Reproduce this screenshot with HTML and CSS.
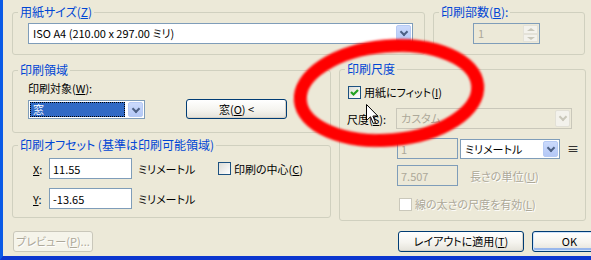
FILE: index.html
```html
<!DOCTYPE html>
<html lang="ja">
<head>
  <meta charset="UTF-8" />
  <title>印刷</title>
  <link rel="stylesheet" href="styles.css">
</head>
<body>

  <div class="window">

    <div class="row-top">
      <fieldset class="group paper">
        <legend>用紙サイズ(<u>Z</u>)</legend>
        <div class="group-body">
          <div class="combo paper-combo">
            <span class="combo-text">ISO A4 (210.00 x 297.00 ミリ)</span>
            <span class="drop"></span>
          </div>
        </div>
      </fieldset>

      <fieldset class="group copies">
        <legend>印刷部数(<u>B</u>):</legend>
        <div class="group-body">
          <div class="spin">
            <span class="spin-text">1</span>
            <span class="spin-btns">
              <span class="spin-btn up"></span>
              <span class="spin-btn down"></span>
            </span>
          </div>
        </div>
      </fieldset>
    </div>

    <div class="row-middle">
      <div class="col-left">
        <fieldset class="group area">
          <legend>印刷領域</legend>
          <div class="group-body">
            <div class="line">印刷対象(<u>W</u>):</div>
            <div class="area-row">
              <div class="combo area-combo">
                <span class="combo-text selected">窓</span>
                <span class="drop"></span>
              </div>
              <button class="btn window-btn">窓(<u>O</u>) &lt;</button>
            </div>
          </div>
        </fieldset>

        <fieldset class="group offset">
          <legend>印刷オフセット (基準は印刷可能領域)</legend>
          <div class="group-body">
            <div class="field-row">
              <span class="axis"><u>X</u>:</span>
              <input class="text-input offset-input" type="text" value="11.55">
              <span class="unit">ミリメートル</span>
              <span class="check"></span>
              <span class="check-label">印刷の中心(<u>C</u>)</span>
            </div>
            <div class="field-row">
              <span class="axis"><u>Y</u>:</span>
              <input class="text-input offset-input" type="text" value="-13.65">
              <span class="unit">ミリメートル</span>
            </div>
          </div>
        </fieldset>
      </div>

      <fieldset class="group scale">
        <legend>印刷尺度</legend>
        <div class="group-body">
          <div class="scale-row">
            <span class="check checked">
              <svg width="11" height="11" viewBox="0 0 11 11"><path d="M2 5 L4.5 7.5 L9 3" fill="none" stroke="#21a121" stroke-width="2.2"/></svg>
            </span>
            <span class="check-label">用紙にフィット(<u>I</u>)</span>
          </div>
          <div class="scale-row gap-10">
            <span class="scale-label">尺度(<u>S</u>):</span>
            <div class="combo disabled scale-combo">
              <span class="combo-text">カスタム</span>
              <span class="drop"></span>
            </div>
          </div>
          <div class="scale-row gap-9 indent">
            <input class="text-input small-input" type="text" value="1" disabled>
            <div class="combo unit-combo">
              <span class="combo-text">ミリメートル</span>
              <span class="drop"></span>
            </div>
            <span class="equals">≡</span>
          </div>
          <div class="scale-row gap-6 indent">
            <input class="text-input small-input" type="text" value="7.507" disabled>
            <span class="muted units-label">長さの単位(<u>U</u>)</span>
          </div>
          <div class="scale-row gap-11 indent-check">
            <span class="check disabled"></span>
            <span class="check-label muted">線の太さの尺度を有効(<u>L</u>)</span>
          </div>
        </div>
      </fieldset>
    </div>

    <div class="row-buttons">
      <button class="btn preview" disabled>プレビュー(<u>P</u>)...</button>
      <button class="btn apply">レイアウトに適用(<u>T</u>)</button>
      <button class="btn ok">OK</button>
    </div>

  </div>

  <svg class="annotation" width="591" height="260" viewBox="0 0 591 260">
    <defs>
      <filter id="soft" x="-10%" y="-10%" width="120%" height="120%">
        <feGaussianBlur stdDeviation="0.9"/>
      </filter>
    </defs>
    <ellipse cx="389" cy="93" rx="89" ry="47" transform="rotate(-5 389 93)"
             fill="none" stroke="#ff0000" stroke-width="13" filter="url(#soft)"/>
  </svg>

  <svg class="cursor" width="14" height="22" viewBox="0 0 14 22">
    <path d="M0.5 0.5 L0.5 16.5 L4.5 12.8 L7.3 19.5 L9.6 18.5 L6.9 12 L11.8 12 Z"
          fill="#fff" stroke="#000" stroke-width="1"/>
  </svg>

</body>
</html>
```

FILE: styles.css
```css
* {
  box-sizing: border-box;
}
html, body {
  margin: 0;
}
body {
  position: relative;
  width: 591px;
  height: 260px;
  overflow: hidden;
  background-color: #ece9d8;
  color: #000;
  font-family: "Noto Sans CJK JP", "Liberation Sans", sans-serif;
  font-size: 11px;
  line-height: 14px;
  font-feature-settings: "palt";
}
u {
  text-underline-offset: 1px;
}
.window {
  width: 620px;
  height: 260px;
  border-left: 3px solid #0a5ae6;
  border-bottom: 4px solid #0b36cf;
  padding: 5px 13px 0 9px;
}

/* group boxes */
.group {
  margin: 0;
  padding: 0;
  border: 1px solid #d0d0bf;
  border-radius: 3px;
  min-width: 0;
}
.group legend {
  margin-left: 5px;
  padding: 0 2px;
  color: #0046d5;
  font-size: 12px;
  line-height: 14px;
}
.row-top {
  display: flex;
  gap: 8px;
}
.paper {
  width: 413px;
}
.paper .group-body {
  padding: 4px 0 10px 15px;
}
.copies {
  width: 152px;
}
.copies .group-body {
  padding: 4px 0 0 39px;
}
.row-middle {
  display: flex;
  align-items: flex-start;
  gap: 8px;
  margin-top: 7px;
}
.col-left {
  display: flex;
  flex-direction: column;
  gap: 5px;
  width: 319px;
  margin-top: 1px;
}
.area .group-body {
  padding: 4px 0 13px 15px;
}
.line {
  line-height: 14px;
}
.area-row {
  display: flex;
  align-items: center;
  margin-top: 4px;
}
.offset .group-body {
  padding: 6px 0 8px 20px;
}
.field-row {
  display: flex;
  align-items: center;
}
.field-row + .field-row {
  margin-top: 9px;
}
.axis {
  width: 16px;
}
.unit {
  width: 80px;
  margin-left: 6px;
}
.scale {
  width: 247px;
}
.scale .group-body {
  padding: 9px 0 9px 8px;
}
.scale-row {
  display: flex;
  align-items: center;
}
.gap-10 { margin-top: 9px; }
.gap-9 { margin-top: 9px; }
.gap-6 { margin-top: 6px; }
.gap-11 { margin-top: 11px; }
.indent {
  padding-left: 49px;
}
.indent-check {
  padding-left: 51px;
}
.scale-label {
  width: 49px;
  margin-left: -1px;
  padding-right: 1px;
}
.equals {
  margin-left: 7px;
  font-size: 12px;
}
.units-label {
  margin-left: 12px;
}
.muted {
  color: #aca899;
  text-shadow: 1px 1px 0 #fff;
}

/* combo boxes */
.combo {
  display: flex;
  align-items: stretch;
  height: 21px;
  padding: 1px;
  border: 1px solid #7f9db9;
  background-color: #fff;
}
.combo-text {
  flex: 1;
  padding-left: 3px;
  line-height: 17px;
  white-space: nowrap;
}
.combo-text.selected {
  flex: none;
  width: 95px;
  margin-right: 2px;
  background-color: #316ac5;
  color: #fff;
  outline: 1px dotted #000;
  outline-offset: -1px;
}
.drop {
  position: relative;
  width: 15px;
  margin-left: auto;
  border: 1px solid #b6caf4;
  border-radius: 2px;
  background: linear-gradient(#cbdafc, #b4c8f6);
}
.drop::after {
  content: "";
  position: absolute;
  left: 4px;
  top: 3px;
  width: 4px;
  height: 4px;
  border-right: 2px solid #4d6185;
  border-bottom: 2px solid #4d6185;
  transform: rotate(45deg);
}
.combo.disabled {
  border-color: #c9c7ba;
  background-color: #ece9d8;
  color: #aca899;
}
.combo.disabled .drop {
  border-color: #e2e0d6;
  background: #f3f2ec;
}
.combo.disabled .drop::after {
  border-color: #c9c7ba;
}
.paper-combo {
  width: 385px;
}
.area-combo {
  width: 117px;
  height: 19px;
}
.area-combo .combo-text {
  line-height: 15px;
}
.scale-combo {
  width: 176px;
}
.unit-combo {
  width: 100px;
  height: 20px;
  margin-left: 2px;
}
.unit-combo .combo-text {
  line-height: 16px;
}

/* spin box */
.spin {
  display: flex;
  width: 67px;
  height: 21px;
  padding: 1px;
  border: 1px solid #7f9db9;
}
.spin-text {
  flex: 1;
  padding-left: 3px;
  line-height: 17px;
  color: #aca899;
}
.spin-btns {
  display: flex;
  flex-direction: column;
  width: 15px;
}
.spin-btn {
  position: relative;
  flex: 1;
  border: 1px solid #e4e2d8;
  background-color: #f3f2ec;
}
.spin-btn::after {
  content: "";
  position: absolute;
  left: 3px;
  border-left: 4px solid transparent;
  border-right: 4px solid transparent;
}
.spin-btn.up::after {
  top: 2px;
  border-bottom: 3px solid #c9c7ba;
}
.spin-btn.down::after {
  top: 2px;
  border-top: 3px solid #c9c7ba;
}

/* text inputs */
.text-input {
  height: 21px;
  margin: 0;
  padding: 0 3px;
  border: 1px solid #7f9db9;
  background-color: #fff;
  font: inherit;
  color: #000;
  outline: none;
}
.text-input:disabled {
  background-color: #ece9d8;
  color: #aca899;
}
.offset-input {
  width: 83px;
}
.small-input {
  width: 61px;
}

/* check boxes */
.check {
  display: inline-flex;
  align-items: center;
  justify-content: center;
  width: 13px;
  height: 13px;
  border: 1px solid #1c5180;
  background: linear-gradient(135deg, #dcdcd7, #fff);
}
.check.disabled {
  border-color: #cac8bb;
  background: #fff;
}
.check-label {
  margin-left: 3px;
}

/* push buttons */
.row-buttons {
  display: flex;
  gap: 8px;
  margin-top: 10px;
}
.btn {
  height: 21px;
  margin: 0;
  padding: 0;
  border: 1px solid #003c74;
  border-radius: 3px;
  background: linear-gradient(#ffffff, #f5f4ef 55%, #e4e2d9);
  box-shadow: inset -1px -1px 0 #d8d2c6;
  font: inherit;
  color: #000;
  line-height: 17px;
  white-space: nowrap;
}
.window-btn {
  width: 101px;
  height: 20px;
  margin-left: 41px;
}
.preview {
  width: 80px;
  margin-left: 1px;
  margin-right: auto;
  border-color: #c9c7ba;
  background: #f5f4ea;
  box-shadow: none;
  color: #aca899;
  text-shadow: 1px 1px 0 #fff;
}
.apply {
  width: 126px;
}
.ok {
  width: 75px;
  box-shadow: inset 0 0 0 1px #cee3fc, inset 0 -2px 0 1px #98b7ec;
}

/* overlays drawn on top of the dialog */
.annotation {
  position: absolute;
  left: 0;
  top: 0;
  pointer-events: none;
}
.cursor {
  position: absolute;
  left: 366px;
  top: 104px;
}
```
